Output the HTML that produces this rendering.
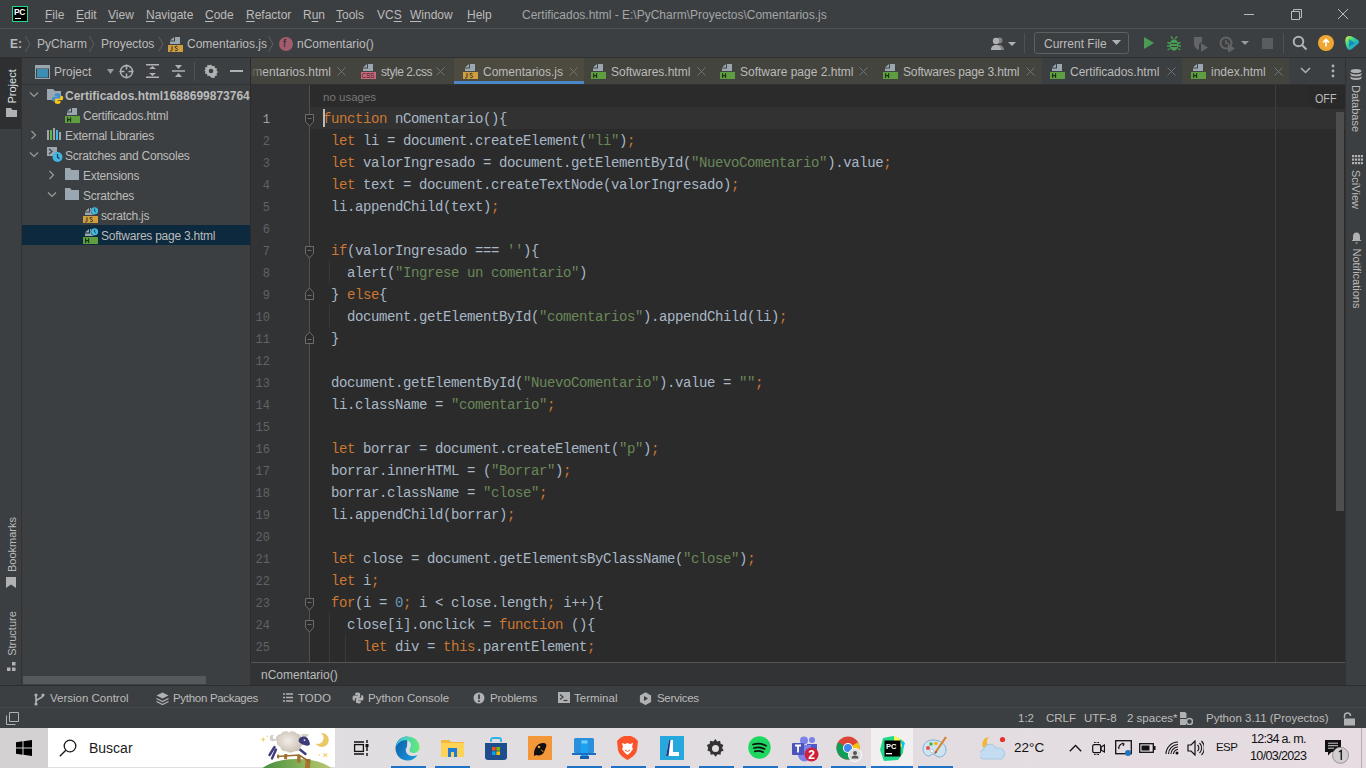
<!DOCTYPE html>
<html><head><meta charset="utf-8">
<style>
*{margin:0;padding:0;box-sizing:border-box}
html,body{width:1366px;height:768px;overflow:hidden;background:#3c3f41;font-family:"Liberation Sans",sans-serif;font-size:12px;color:#bbbbbb}
.a{position:absolute}
.t{position:absolute;white-space:pre;line-height:1}
#menubar{left:0;top:0;width:1366px;height:29px;background:#3c3f41;border-bottom:1px solid #515151}
#navbar{left:0;top:29px;width:1366px;height:29px;background:#3c3f41;border-bottom:1px solid #323232}
#lstripe{left:0;top:57px;width:22px;height:651px;background:#3c3f41;border-right:1px solid #323232}
#proj{left:22px;top:57px;width:228px;height:629px;background:#3c3f41;overflow:hidden}
#tabs{left:250px;top:57px;width:1095px;height:28px;background:#3c3f41;border-bottom:1px solid #323232;overflow:hidden}
#editor{left:250px;top:85px;width:1095px;height:579px;background:#2b2b2b;overflow:hidden}
#crumbs{left:250px;top:662px;width:1095px;height:23px;background:#313335;border-top:1px solid #555555}
#rstripe{left:1345px;top:57px;width:21px;height:651px;background:#3c3f41;border-left:1px solid #323232}
#bottombar{left:0;top:686px;width:1366px;height:22px;background:#3c3f41}
#status{left:0;top:707px;width:1366px;height:21px;background:#3c3f41;border-top:1px solid #474747}
#taskbar{left:0;top:728px;width:1366px;height:40px;background:linear-gradient(90deg,#dfdee0 0%,#e1dde0 50%,#e6dce2 100%)}
.code{left:65px;font-family:"Liberation Mono",monospace;font-size:14px;letter-spacing:-0.4px;line-height:22px;color:#a9b7c6}
.ln{left:0;width:20px;text-align:right;font-family:"Liberation Mono",monospace;font-size:12px;line-height:22px}
.mi{top:9px}
u{text-decoration:underline;text-decoration-thickness:1px;text-underline-offset:1.5px}
.tr{font-size:12px;letter-spacing:-0.25px}
.bb{top:7px;font-size:11.5px}
.sb{top:5px;font-size:11.5px}
.rs{font-size:11px;transform:rotate(90deg);text-align:center}
.k{color:#cc7832}.s{color:#6a8759}.n{color:#6897bb}
</style></head><body>
<svg width="0" height="0" style="position:absolute"><defs>
<g id="ijs"><path d="M8 1h5v7H3V5.5h5z" fill="#9aa7b0"/><path d="M3 4.5L7 1v3.5z" fill="#9aa7b0"/><rect x="1" y="9" width="15" height="7" fill="#cf9e3e"/><path d="M5 10.3v3.6c0 .9-.5 1.1-1.1 1.1H3M10.5 10.8c-.3-.4-.8-.5-1.3-.5-.7 0-1.2.4-1.2 1 0 1.3 2.6.9 2.6 2.3 0 .7-.6 1.1-1.3 1.1-.6 0-1.1-.2-1.4-.6" fill="none" stroke="#2b2b2b" stroke-width="1"/></g>
<g id="ihtml"><path d="M8 1h5v7H3V5.5h5z" fill="#9aa7b0"/><path d="M3 4.5L7 1v3.5z" fill="#9aa7b0"/><rect x="1" y="9" width="15" height="7" fill="#5f9e40"/><path d="M3.6 10.2v4.8M6.6 10.2v4.8M3.6 12.6h3" stroke="#1e2e16" stroke-width="1.1"/></g>
<g id="icss"><path d="M8 1h5v7H3V5.5h5z" fill="#9aa7b0"/><path d="M3 4.5L7 1v3.5z" fill="#9aa7b0"/><rect x="1" y="9" width="15" height="7" fill="#c86a7c"/><text x="1.6" y="15.4" font-family="Liberation Sans" font-size="6.3" fill="#3a1a20">CSS</text></g>
</defs></svg>
<div id="menubar" class="a">
<div class="a" style="left:12px;top:6px;width:16px;height:16px;background:#000;border:1px solid #21d789"></div>
<div class="t" style="left:14px;top:8px;font-size:8.5px;font-weight:bold;color:#fff;letter-spacing:-0.3px">PC</div>
<div class="a" style="left:15px;top:18px;width:6px;height:1px;background:#fff"></div>
<div class="t mi" style="left:45px"><u>F</u>ile</div>
<div class="t mi" style="left:76px"><u>E</u>dit</div>
<div class="t mi" style="left:108px"><u>V</u>iew</div>
<div class="t mi" style="left:146px"><u>N</u>avigate</div>
<div class="t mi" style="left:205px"><u>C</u>ode</div>
<div class="t mi" style="left:246px"><u>R</u>efactor</div>
<div class="t mi" style="left:303px">R<u>u</u>n</div>
<div class="t mi" style="left:336px"><u>T</u>ools</div>
<div class="t mi" style="left:377px">VC<u>S</u></div>
<div class="t mi" style="left:410px"><u>W</u>indow</div>
<div class="t mi" style="left:467px"><u>H</u>elp</div>
<div class="t" style="left:522px;top:9px;color:#a3a5a7">Certificados.html - E:\PyCharm\Proyectos\Comentarios.js</div>
<div class="a" style="left:1244px;top:14px;width:10px;height:1px;background:#bbb"></div>
<svg class="a" style="left:1291px;top:9px" width="11" height="11"><path d="M0.5 2.5h8v8h-8z M2.5 2.5v-2h8v8h-2" fill="none" stroke="#bbb"/></svg>
<svg class="a" style="left:1337px;top:8px" width="12" height="12"><path d="M1 1L11 11M11 1L1 11" stroke="#bbb" stroke-width="1"/></svg>
</div>
<div id="navbar" class="a">
<div class="t" style="left:10px;top:9px;font-weight:bold">E:</div>
<svg class="a" style="left:25px;top:7px" width="6" height="16"><path d="M0.5 0.5L5 8L0.5 15.5" fill="none" stroke="#5e6060"/></svg>
<div class="t" style="left:37px;top:9px">PyCharm</div>
<svg class="a" style="left:89px;top:7px" width="6" height="16"><path d="M0.5 0.5L5 8L0.5 15.5" fill="none" stroke="#5e6060"/></svg>
<div class="t" style="left:101px;top:9px">Proyectos</div>
<svg class="a" style="left:158px;top:7px" width="6" height="16"><path d="M0.5 0.5L5 8L0.5 15.5" fill="none" stroke="#5e6060"/></svg>
<svg class="a" style="left:167px;top:7px" width="16" height="16"><use href="#ijs"/></svg>
<div class="t" style="left:187px;top:9px">Comentarios.js</div>
<svg class="a" style="left:268px;top:7px" width="6" height="16"><path d="M0.5 0.5L5 8L0.5 15.5" fill="none" stroke="#5e6060"/></svg>
<div class="a" style="left:279px;top:8px;width:14px;height:14px;border-radius:50%;background:#a25c6e"></div>
<div class="t" style="left:283px;top:9px;font-size:11px;color:#2b2b2b">f</div>
<div class="t" style="left:297px;top:9px">nComentario()</div>
<svg class="a" style="left:990px;top:7px" width="28" height="16"><circle cx="9.5" cy="4.5" r="3" fill="#7f8284"/><path d="M6 14c0-3.5 1.5-5 3.5-5s4.5 1.5 4.5 5z" fill="#7f8284"/><circle cx="6" cy="5" r="3.2" fill="#afb1b3"/><path d="M1 14c0-3.5 2-5 5-5s5 1.5 5 5z" fill="#afb1b3"/><path d="M18 6h8l-4 4z" fill="#afb1b3"/></svg>
<div class="a" style="left:1024px;top:4px;width:1px;height:20px;background:#515151"></div>
<div class="a" style="left:1034px;top:3px;width:95px;height:22px;border:1px solid #5e6060;border-radius:3px"></div>
<div class="t" style="left:1044px;top:9px">Current File</div>
<svg class="a" style="left:1112px;top:11px" width="9" height="6"><path d="M0 0h9l-4.5 5z" fill="#afb1b3"/></svg>
<svg class="a" style="left:1143px;top:7px" width="12" height="14"><path d="M1 1L11 7L1 13z" fill="#499c54"/></svg>
<svg class="a" style="left:1166px;top:6px" width="16" height="17"><path d="M5 1.5l1.8 2.2M11 1.5L9.2 3.7" stroke="#499c54" stroke-width="1.4"/><ellipse cx="8" cy="10" rx="4.3" ry="5.8" fill="#499c54"/><path d="M1.5 7.5l2.5 1M14.5 7.5l-2.5 1M1 11h3M15 11h-3M1.5 15l2.5-1.5M14.5 15L12 13.5" stroke="#499c54" stroke-width="1.4"/><path d="M5 8.5h6M5 11.5h6" stroke="#3c3f41" stroke-width="1.2"/></svg>
<svg class="a" style="left:1192px;top:7px" width="17" height="16"><path d="M2 1h8v5l-3 2v6c-3-1-5-3-5-6z" fill="#626466"/><path d="M9 7l7 4.5L9 16z" fill="#626466"/></svg>
<svg class="a" style="left:1219px;top:7px" width="30" height="16"><circle cx="7" cy="7" r="5.5" fill="none" stroke="#626466" stroke-width="2"/><path d="M7 4v3.5h3" stroke="#626466" stroke-width="1.5" fill="none"/><path d="M9 8l7 4.5L9 17z" fill="#626466"/><path d="M22 5h8l-4 4z" fill="#9a9a9a"/></svg>
<div class="a" style="left:1262px;top:9px;width:11px;height:11px;background:#5a5d5f"></div>
<div class="a" style="left:1283px;top:4px;width:1px;height:20px;background:#515151"></div>
<svg class="a" style="left:1292px;top:6px" width="16" height="16"><circle cx="6.5" cy="6.5" r="4.8" fill="none" stroke="#afb1b3" stroke-width="2"/><path d="M10 10l4.5 4.5" stroke="#afb1b3" stroke-width="2.2"/></svg>
<div class="a" style="left:1318px;top:6px;width:16px;height:16px;border-radius:50%;background:#f0a732"></div>
<svg class="a" style="left:1318px;top:6px" width="16" height="16"><path d="M8 4.5v7M5 7.5l3-3 3 3" stroke="#fff" stroke-width="1.6" fill="none"/></svg>
<svg class="a" style="left:1344px;top:6px" width="16" height="16"><defs><linearGradient id="tbg" x1="0" y1="0" x2="1" y2="1"><stop offset="0" stop-color="#f9e53c"/><stop offset="0.35" stop-color="#3ddc84"/><stop offset="1" stop-color="#087cfa"/></linearGradient></defs><path d="M3 1.5C5 0.5 7 1 9 2l5 3c1.5 1 1.5 3 0 4l-6 5c-2 1.5-4 1-5-1C1.5 10 1 6 1.5 4 1.8 2.8 2.3 2 3 1.5z" fill="url(#tbg)"/><path d="M5 4l6 4-6 4z" fill="#0a5fd0" opacity="0.6"/></svg>
</div>
<div id="lstripe" class="a">
<div class="a" style="left:0;top:0;width:21px;height:72px;background:#2d2f30"></div>
<div class="t" style="left:-5px;top:23.5px;width:34px;transform:rotate(-90deg);font-size:11px;color:#dfe1e5;text-align:center">Project</div>
<svg class="a" style="left:6px;top:51px" width="11" height="9"><path d="M0 0h5l1.5 2H11v7H0z" fill="#afb1b3"/></svg>
<div class="t" style="left:-15px;top:482px;width:55px;transform:rotate(-90deg);font-size:11px;color:#bbbbbb;text-align:center">Bookmarks</div>
<svg class="a" style="left:6px;top:520px" width="10" height="11"><path d="M0 0h10v11L5 7.5 0 11z" fill="#afb1b3"/></svg>
<div class="t" style="left:-10px;top:571px;width:45px;transform:rotate(-90deg);font-size:11px;color:#bbbbbb;text-align:center">Structure</div>
<svg class="a" style="left:7px;top:605px" width="10" height="10"><path d="M5 0h3.5v3.5H5zM0 5.5h3.5V9H0zM5 5.5h3.5V9H5z" fill="#afb1b3"/></svg>
</div>
<div id="proj" class="a">
<div class="a" style="left:0;top:27px;width:228px;height:1px;background:#323232"></div>
<svg class="a" style="left:13px;top:8px" width="15" height="14"><rect x="0.5" y="0.5" width="14" height="13" fill="none" stroke="#9aa7b0"/><rect x="0.5" y="0.5" width="14" height="3" fill="#9aa7b0"/><rect x="2" y="4" width="11" height="8.5" fill="#3e8db3"/></svg>
<div class="t" style="left:32px;top:9px">Project</div>
<svg class="a" style="left:85px;top:12px" width="8" height="6"><path d="M0 0h7l-3.5 5z" fill="#9a9a9a"/></svg>
<svg class="a" style="left:97px;top:7px" width="15" height="15"><circle cx="7.5" cy="7.5" r="6" fill="none" stroke="#afb1b3" stroke-width="1.5"/><path d="M7.5 0.5v5M7.5 9.5v5M0.5 7.5h5M9.5 7.5h5" stroke="#afb1b3" stroke-width="1.5"/></svg>
<svg class="a" style="left:124px;top:7px" width="13" height="14"><path d="M0 0.75h13M0 13.25h13" stroke="#afb1b3" stroke-width="1.5"/><path d="M3 5l3.5-3 3.5 3zM3 9l3.5 3 3.5-3z" fill="#afb1b3"/></svg>
<svg class="a" style="left:150px;top:7px" width="13" height="14"><path d="M0 7h13" stroke="#afb1b3" stroke-width="1.5"/><path d="M3 1l3.5 4 3.5-4zM3 13l3.5-4 3.5 4z" fill="#afb1b3"/></svg>
<div class="a" style="left:172px;top:5px;width:1px;height:19px;background:#515151"></div>
<svg class="a" style="left:182px;top:7px" width="14" height="14"><path d="M7 0.5l1.3 1.8 2.2-.6.4 2.2 2.2.6-.6 2.2 1.8 1.3-1.8 1.3.6 2.2-2.2.6-.4 2.2-2.2-.6L7 13.5l-1.3-1.8-2.2.6-.4-2.2-2.2-.6.6-2.2L-.3 7l1.8-1.3-.6-2.2 2.2-.6.4-2.2 2.2.6z" fill="#afb1b3"/><circle cx="7" cy="7" r="2.3" fill="#3c3f41"/></svg>
<div class="a" style="left:208px;top:13px;width:13px;height:2px;background:#afb1b3"></div>
<div class="a" style="left:0;top:168px;width:228px;height:20px;background:#0d293e"></div>
<svg class="a chev" style="left:7px;top:34px" width="10" height="8"><path d="M1 1.5l4 4 4-4" fill="none" stroke="#9a9a9a" stroke-width="1.2"/></svg>
<svg class="a" style="left:25px;top:30px" width="18" height="18"><path d="M0 2h6l2 2h6v9H0z" fill="#9aa7b0"/><path d="M6 10h8v3H6z" fill="#3c3f41" opacity="0"/><g id="pyb"><path d="M10.3 6.3c-2.2 0-2.6 1-2.6 1.7v1.3h2.7v.6H6.6C5.6 9.9 5 10.7 5 12.1c0 1.5.6 2.3 1.6 2.3h1v-1.3c0-1 .6-1.7 1.6-1.7h2.6c.9 0 1.6-.6 1.6-1.5V8c0-1-.9-1.7-3.1-1.7z" fill="#3d8fd1"/></g><path d="M10.3 6.3c-2.2 0-2.6 1-2.6 1.7v1.3h2.7v.6H6.6C5.6 9.9 5 10.7 5 12.1c0 1.5.6 2.3 1.6 2.3h1v-1.3c0-1 .6-1.7 1.6-1.7h2.6c.9 0 1.6-.6 1.6-1.5V8c0-1-.9-1.7-3.1-1.7z" fill="#f5c518" transform="rotate(180 10.6 11.6)"/></svg>
<div class="t tr" style="left:43px;top:33px;font-weight:bold;color:#bbbbbb;font-size:12px;letter-spacing:0">Certificados.html1688699873764</div>
<svg class="a" style="left:42px;top:50px" width="16" height="16"><use href="#ihtml"/></svg>
<div class="t tr" style="left:61px;top:53px">Certificados.html</div>
<svg class="a chev" style="left:8px;top:73px" width="8" height="10"><path d="M1.5 1l4 4-4 4" fill="none" stroke="#9a9a9a" stroke-width="1.2"/></svg>
<svg class="a" style="left:24px;top:71px" width="16" height="14"><rect x="1" y="2" width="2" height="10" fill="#9aa7b0"/><rect x="4" y="2" width="2" height="10" fill="#62b543"/><rect x="7" y="0" width="2" height="12" fill="#9aa7b0"/><rect x="10" y="2" width="2" height="10" fill="#40b6e0"/><rect x="13" y="4" width="2" height="8" fill="#9aa7b0"/></svg>
<div class="t tr" style="left:43px;top:73px">External Libraries</div>
<svg class="a chev" style="left:7px;top:94px" width="10" height="8"><path d="M1 1.5l4 4 4-4" fill="none" stroke="#9a9a9a" stroke-width="1.2"/></svg>
<svg class="a" style="left:25px;top:89px" width="17" height="17"><path d="M0 1h10v5l-4 4H0z" fill="#9aa7b0"/><path d="M2 3l3 2.5L2 8" stroke="#3c3f41" stroke-width="1.2" fill="none"/><circle cx="10.5" cy="11" r="5" fill="#40b6e0"/><path d="M10.5 8v3.3l2 1.5" stroke="#1f3a4a" stroke-width="1.2" fill="none"/></svg>
<div class="t tr" style="left:43px;top:93px">Scratches and Consoles</div>
<svg class="a chev" style="left:26px;top:113px" width="8" height="10"><path d="M1.5 1l4 4-4 4" fill="none" stroke="#9a9a9a" stroke-width="1.2"/></svg>
<svg class="a" style="left:43px;top:111px" width="14" height="12"><path d="M0 0h5l1.5 2H14v10H0z" fill="#9aa7b0"/></svg>
<div class="t tr" style="left:61px;top:113px">Extensions</div>
<svg class="a chev" style="left:25px;top:134px" width="10" height="8"><path d="M1 1.5l4 4 4-4" fill="none" stroke="#9a9a9a" stroke-width="1.2"/></svg>
<svg class="a" style="left:43px;top:131px" width="14" height="12"><path d="M0 0h5l1.5 2H14v10H0z" fill="#9aa7b0"/></svg>
<div class="t tr" style="left:61px;top:133px">Scratches</div>
<svg class="a" style="left:60px;top:150px" width="17" height="16"><use href="#ijs"/><circle cx="12.6" cy="3.8" r="3.9" fill="#3c3f41"/><circle cx="12.6" cy="3.8" r="3.5" fill="#40b6e0"/><path d="M12.6 1.6v2.4l1.3 1" stroke="#1f3a4a" stroke-width="0.9" fill="none"/></svg>
<div class="t tr" style="left:79px;top:153px">scratch.js</div>
<svg class="a" style="left:60px;top:171px" width="17" height="16"><use href="#ihtml"/><circle cx="12.6" cy="3.8" r="3.9" fill="#0d293e"/><circle cx="12.6" cy="3.8" r="3.5" fill="#40b6e0"/><path d="M12.6 1.6v2.4l1.3 1" stroke="#1f3a4a" stroke-width="0.9" fill="none"/></svg>
<div class="t tr" style="left:79px;top:173px">Softwares page 3.html</div>
<div class="a" style="left:1px;top:619px;width:183px;height:8px;background:#56595b;border-radius:1px"></div>
</div>
<div id="tabs" class="a">
<div class="a" style="left:0;top:1px;width:1039px;height:26px;background:#44443e"></div>
<div class="a" style="left:792px;top:1px;width:140px;height:26px;background:#3c3f41"></div>
<div class="t" style="left:-13px;top:9px">Comentarios.html</div>
<svg class="a" style="left:87px;top:10px" width="9" height="9"><path d="M0.5 0.5l8 8M8.5 0.5l-8 8" stroke="#707274" stroke-width="1"/></svg>
<svg class="a" style="left:110px;top:6px" width="16" height="16"><use href="#icss"/></svg>
<div class="t" style="left:131px;top:9px;letter-spacing:-0.45px">style 2.css</div>
<svg class="a" style="left:186px;top:10px" width="9" height="9"><path d="M0.5 0.5l8 8M8.5 0.5l-8 8" stroke="#707274" stroke-width="1"/></svg>
<div class="a" style="left:204px;top:1px;width:130px;height:26px;background:#4d4a3f"></div>
<div class="a" style="left:204px;top:24px;width:130px;height:3px;background:#4a88c7"></div>
<svg class="a" style="left:212px;top:6px" width="16" height="16"><use href="#ijs"/></svg>
<div class="t" style="left:233px;top:9px">Comentarios.js</div>
<svg class="a" style="left:319px;top:10px" width="9" height="9"><path d="M0.5 0.5l8 8M8.5 0.5l-8 8" stroke="#707274" stroke-width="1"/></svg>
<svg class="a" style="left:340px;top:6px" width="16" height="16"><use href="#ihtml"/></svg>
<div class="t" style="left:361px;top:9px">Softwares.html</div>
<svg class="a" style="left:447px;top:10px" width="9" height="9"><path d="M0.5 0.5l8 8M8.5 0.5l-8 8" stroke="#707274" stroke-width="1"/></svg>
<svg class="a" style="left:469px;top:6px" width="16" height="16"><use href="#ihtml"/></svg>
<div class="t" style="left:490px;top:9px">Software page 2.html</div>
<svg class="a" style="left:609px;top:10px" width="9" height="9"><path d="M0.5 0.5l8 8M8.5 0.5l-8 8" stroke="#707274" stroke-width="1"/></svg>
<svg class="a" style="left:632px;top:6px" width="16" height="16"><use href="#ihtml"/></svg>
<div class="t" style="left:653px;top:9px;letter-spacing:-0.15px">Softwares page 3.html</div>
<svg class="a" style="left:776px;top:10px" width="9" height="9"><path d="M0.5 0.5l8 8M8.5 0.5l-8 8" stroke="#707274" stroke-width="1"/></svg>
<svg class="a" style="left:799px;top:6px" width="16" height="16"><use href="#ihtml"/></svg>
<div class="t" style="left:820px;top:9px">Certificados.html</div>
<svg class="a" style="left:917px;top:10px" width="9" height="9"><path d="M0.5 0.5l8 8M8.5 0.5l-8 8" stroke="#707274" stroke-width="1"/></svg>
<svg class="a" style="left:940px;top:6px" width="16" height="16"><use href="#ihtml"/></svg>
<div class="t" style="left:961px;top:9px">index.html</div>
<svg class="a" style="left:1024px;top:10px" width="9" height="9"><path d="M0.5 0.5l8 8M8.5 0.5l-8 8" stroke="#707274" stroke-width="1"/></svg>
<div class="a" style="left:0;top:1px;width:14px;height:26px;background:linear-gradient(90deg,#44443e,rgba(68,68,62,0))"></div>
<svg class="a" style="left:1050px;top:10px" width="11" height="7"><path d="M1 1l4.5 4.5L10 1" fill="none" stroke="#afb1b3" stroke-width="1.5"/></svg>
<svg class="a" style="left:1081px;top:7px" width="4" height="14"><circle cx="2" cy="2" r="1.4" fill="#afb1b3"/><circle cx="2" cy="7" r="1.4" fill="#afb1b3"/><circle cx="2" cy="12" r="1.4" fill="#afb1b3"/></svg>
</div>
<div id="editor" class="a">
<div class="a" style="left:0;top:0;width:59px;height:579px;background:#313335"></div>
<div class="a" style="left:59px;top:22px;width:1036px;height:22px;background:#323232"></div>
<div class="a" style="left:59px;top:0;width:1px;height:579px;background:#505050"></div>
<div class="a" style="left:1025px;top:0;width:1px;height:579px;background:#3e3e3e"></div>
<div class="a" style="left:79px;top:176px;width:1px;height:22px;background:#393939"></div>
<div class="a" style="left:79px;top:220px;width:1px;height:22px;background:#393939"></div>
<div class="a" style="left:79px;top:528px;width:1px;height:22px;background:#393939"></div>
<div class="a" style="left:79px;top:550px;width:1px;height:29px;background:#393939"></div>
<div class="a" style="left:95px;top:550px;width:1px;height:29px;background:#393939"></div>
<div class="t" style="left:73px;top:7px;font-size:11.5px;color:#787878">no usages</div>
<div class="t ln" style="top:24px;color:#a4a3a3">1</div>
<div class="t code" style="top:23px"> <span class="k">function</span> nComentario(){</div>
<div class="t ln" style="top:46px;color:#606366">2</div>
<div class="t code" style="top:45px">  <span class="k">let</span> li = document.createElement(<span class="s">"li"</span>)<span class="k">;</span></div>
<div class="t ln" style="top:68px;color:#606366">3</div>
<div class="t code" style="top:67px">  <span class="k">let</span> valorIngresado = document.getElementById(<span class="s">"NuevoComentario"</span>).value<span class="k">;</span></div>
<div class="t ln" style="top:90px;color:#606366">4</div>
<div class="t code" style="top:89px">  <span class="k">let</span> text = document.createTextNode(valorIngresado)<span class="k">;</span></div>
<div class="t ln" style="top:112px;color:#606366">5</div>
<div class="t code" style="top:111px">  li.appendChild(text)<span class="k">;</span></div>
<div class="t ln" style="top:134px;color:#606366">6</div>
<div class="t ln" style="top:156px;color:#606366">7</div>
<div class="t code" style="top:155px">  <span class="k">if</span>(valorIngresado === <span class="s">''</span>){</div>
<div class="t ln" style="top:178px;color:#606366">8</div>
<div class="t code" style="top:177px">    alert(<span class="s">"Ingrese un comentario"</span>)</div>
<div class="t ln" style="top:200px;color:#606366">9</div>
<div class="t code" style="top:199px">  } <span class="k">else</span>{</div>
<div class="t ln" style="top:222px;color:#606366">10</div>
<div class="t code" style="top:221px">    document.getElementById(<span class="s">"comentarios"</span>).appendChild(li)<span class="k">;</span></div>
<div class="t ln" style="top:244px;color:#606366">11</div>
<div class="t code" style="top:243px">  }</div>
<div class="t ln" style="top:266px;color:#606366">12</div>
<div class="t ln" style="top:288px;color:#606366">13</div>
<div class="t code" style="top:287px">  document.getElementById(<span class="s">"NuevoComentario"</span>).value = <span class="s">""</span><span class="k">;</span></div>
<div class="t ln" style="top:310px;color:#606366">14</div>
<div class="t code" style="top:309px">  li.className = <span class="s">"comentario"</span><span class="k">;</span></div>
<div class="t ln" style="top:332px;color:#606366">15</div>
<div class="t ln" style="top:354px;color:#606366">16</div>
<div class="t code" style="top:353px">  <span class="k">let</span> borrar = document.createElement(<span class="s">"p"</span>)<span class="k">;</span></div>
<div class="t ln" style="top:376px;color:#606366">17</div>
<div class="t code" style="top:375px">  borrar.innerHTML = (<span class="s">"Borrar"</span>)<span class="k">;</span></div>
<div class="t ln" style="top:398px;color:#606366">18</div>
<div class="t code" style="top:397px">  borrar.className = <span class="s">"close"</span><span class="k">;</span></div>
<div class="t ln" style="top:420px;color:#606366">19</div>
<div class="t code" style="top:419px">  li.appendChild(borrar)<span class="k">;</span></div>
<div class="t ln" style="top:442px;color:#606366">20</div>
<div class="t ln" style="top:464px;color:#606366">21</div>
<div class="t code" style="top:463px">  <span class="k">let</span> close = document.getElementsByClassName(<span class="s">"close"</span>)<span class="k">;</span></div>
<div class="t ln" style="top:486px;color:#606366">22</div>
<div class="t code" style="top:485px">  <span class="k">let</span> i<span class="k">;</span></div>
<div class="t ln" style="top:508px;color:#606366">23</div>
<div class="t code" style="top:507px">  <span class="k">for</span>(i = <span class="n">0</span><span class="k">;</span> i &lt; close.length<span class="k">;</span> i++){</div>
<div class="t ln" style="top:530px;color:#606366">24</div>
<div class="t code" style="top:529px">    close[i].onclick = <span class="k">function</span> (){</div>
<div class="t ln" style="top:552px;color:#606366">25</div>
<div class="t code" style="top:551px">      <span class="k">let</span> div = <span class="k">this</span>.parentElement<span class="k">;</span></div>
<div class="a" style="left:73px;top:24px;width:2px;height:18px;background:#bbbbbb"></div>
<svg class="a" style="left:54px;top:29px" width="11" height="13"><path d="M1.5 0.5h8v7l-4 4.5-4-4.5z" fill="#2b2b2b" stroke="#6d6d6d"/><path d="M3.5 4.5h4" stroke="#6d6d6d"/></svg>
<svg class="a" style="left:54px;top:161px" width="11" height="13"><path d="M1.5 0.5h8v7l-4 4.5-4-4.5z" fill="#2b2b2b" stroke="#6d6d6d"/><path d="M3.5 4.5h4" stroke="#6d6d6d"/></svg>
<svg class="a" style="left:54px;top:513px" width="11" height="13"><path d="M1.5 0.5h8v7l-4 4.5-4-4.5z" fill="#2b2b2b" stroke="#6d6d6d"/><path d="M3.5 4.5h4" stroke="#6d6d6d"/></svg>
<svg class="a" style="left:54px;top:535px" width="11" height="13"><path d="M1.5 0.5h8v7l-4 4.5-4-4.5z" fill="#2b2b2b" stroke="#6d6d6d"/><path d="M3.5 4.5h4" stroke="#6d6d6d"/></svg>
<svg class="a" style="left:54px;top:202px" width="11" height="13"><path d="M1.5 12.5h8v-7l-4-4.5-4 4.5z" fill="#2b2b2b" stroke="#6d6d6d"/><path d="M3.5 8.5h4" stroke="#6d6d6d"/></svg>
<svg class="a" style="left:54px;top:246px" width="11" height="13"><path d="M1.5 12.5h8v-7l-4-4.5-4 4.5z" fill="#2b2b2b" stroke="#6d6d6d"/><path d="M3.5 8.5h4" stroke="#6d6d6d"/></svg>
<div class="a" style="left:1086px;top:27px;width:8px;height:399px;background:#4e4e4e"></div>
<div class="a" style="left:1058px;top:0;width:37px;height:24px;background:#292929;border-radius:0 0 0 10px"></div>
<div class="t" style="left:1065px;top:8px;font-size:12.5px;letter-spacing:0px;transform:scaleX(0.86);transform-origin:0 0;color:#bbbbbb">OFF</div>
</div>
<div id="crumbs" class="a">
<div class="t" style="left:11px;top:6px">nComentario()</div>
</div>
<div id="rstripe" class="a">
<svg class="a" style="left:4px;top:12px" width="12" height="12"><ellipse cx="6" cy="2" rx="5.5" ry="2" fill="#afb1b3"/><path d="M0.5 3.5v2c0 1.1 2.5 2 5.5 2s5.5-.9 5.5-2v-2c0 1.1-2.5 2-5.5 2s-5.5-.9-5.5-2zM0.5 7v2c0 1.1 2.5 2 5.5 2s5.5-.9 5.5-2V7c0 1.1-2.5 2-5.5 2S.5 8.1.5 7z" fill="#afb1b3"/></svg>
<div class="t rs" style="left:-14px;top:46px;width:47px">Database</div>
<svg class="a" style="left:6px;top:98px" width="11" height="10"><rect x="0" y="0" width="2.2" height="2.2" fill="#afb1b3"/><rect x="0" y="3.5" width="2.2" height="2.2" fill="#afb1b3"/><rect x="0" y="7" width="2.2" height="2.2" fill="#afb1b3"/><rect x="3" y="0" width="2.2" height="2.2" fill="#afb1b3"/><rect x="3" y="3.5" width="2.2" height="2.2" fill="#afb1b3"/><rect x="3" y="7" width="2.2" height="2.2" fill="#afb1b3"/><rect x="6" y="0" width="2.2" height="2.2" fill="#afb1b3"/><rect x="6" y="3.5" width="2.2" height="2.2" fill="#afb1b3"/><rect x="6" y="7" width="2.2" height="2.2" fill="#afb1b3"/><rect x="9" y="0" width="2.2" height="2.2" fill="#afb1b3"/><rect x="9" y="3.5" width="2.2" height="2.2" fill="#afb1b3"/><rect x="9" y="7" width="2.2" height="2.2" fill="#afb1b3"/></svg>
<div class="t rs" style="left:-10px;top:127px;width:39px">SciView</div>
<svg class="a" style="left:5px;top:175px" width="11" height="12"><path d="M5.5 0.5c-2.5 0-3.5 2-3.5 4v3L0.5 9h10L9 7.5v-3c0-2-1-4-3.5-4z" fill="#afb1b3"/><path d="M4 10.5h3l-1.5 1.5z" fill="#afb1b3"/></svg>
<div class="t rs" style="left:-20px;top:216px;width:60px">Notifications</div>
</div>
<div id="bottombar" class="a">
<svg class="a" style="left:34px;top:7px" width="11" height="13"><circle cx="2" cy="2" r="1.6" fill="#afb1b3"/><circle cx="2" cy="11" r="1.6" fill="#afb1b3"/><circle cx="9" cy="2" r="1.6" fill="#afb1b3"/><path d="M2 2v9M9 2c0 4-7 3-7 7" stroke="#afb1b3" stroke-width="1.6" fill="none"/></svg>
<div class="t bb" style="left:50px">Version Control</div>
<svg class="a" style="left:156px;top:6px" width="13" height="13"><path d="M6.5 0.5L12.5 3.5 6.5 6.5 0.5 3.5z" fill="#afb1b3"/><path d="M0.5 6.5l6 3 6-3M0.5 9.5l6 3 6-3" stroke="#afb1b3" stroke-width="1.3" fill="none"/></svg>
<div class="t bb" style="left:173px;letter-spacing:-0.3px">Python Packages</div>
<svg class="a" style="left:283px;top:7px" width="10" height="10"><path d="M0 1h2M3 1h7M0 4.5h2M3 4.5h7M0 8h2M3 8h7" stroke="#afb1b3" stroke-width="1.6"/></svg>
<div class="t bb" style="left:298px">TODO</div>
<svg class="a" style="left:352px;top:6px" width="12" height="12"><path d="M5.8 0.5c-2.8 0-2.6 1.2-2.6 1.2v1.3h2.7v.4H2.1S.5 3.2.5 6s1.4 2.7 1.4 2.7h.9V7.4s-.1-1.4 1.4-1.4h2.5s1.4 0 1.4-1.4V1.9S8.2.5 5.8.5z" fill="#afb1b3"/><path d="M6.2 11.5c2.8 0 2.6-1.2 2.6-1.2V9H6.1v-.4h3.8s1.6.2 1.6-2.6-1.4-2.7-1.4-2.7h-.9v1.3s.1 1.4-1.4 1.4H5.3s-1.4 0-1.4 1.4v2.4s-.2 1.4 2.3 1.4z" fill="#afb1b3"/></svg>
<div class="t bb" style="left:368px">Python Console</div>
<svg class="a" style="left:473px;top:6px" width="12" height="12"><circle cx="6" cy="6" r="5.5" fill="#afb1b3"/><path d="M6 2.5v4.5" stroke="#3c3f41" stroke-width="1.8"/><circle cx="6" cy="9" r="1" fill="#3c3f41"/></svg>
<div class="t bb" style="left:490px;letter-spacing:-0.2px">Problems</div>
<svg class="a" style="left:558px;top:6px" width="12" height="11"><rect x="0" y="0" width="12" height="11" fill="#afb1b3"/><path d="M2 2.5l3 2.5-3 2.5" stroke="#3c3f41" stroke-width="1.2" fill="none"/><path d="M5.5 8.5h4" stroke="#3c3f41" stroke-width="1.2"/></svg>
<div class="t bb" style="left:574px">Terminal</div>
<svg class="a" style="left:639px;top:6px" width="13" height="13"><path d="M6.5 0.3l5.6 3.2v6.4l-5.6 3.2-5.6-3.2V3.5z" fill="#afb1b3"/><path d="M5 4l4 2.5-4 2.5z" fill="#3c3f41"/></svg>
<div class="t bb" style="left:657px;letter-spacing:-0.3px">Services</div>
</div>
<div id="status" class="a">
<svg class="a" style="left:6px;top:4px" width="13" height="13"><path d="M3.5 0.5h9v9h-9z" fill="none" stroke="#afb1b3"/><path d="M0.5 3.5v9h9" fill="none" stroke="#afb1b3"/></svg>
<div class="t sb" style="left:1018px">1:2</div>
<div class="t sb" style="left:1046px">CRLF</div>
<div class="t sb" style="left:1084px">UTF-8</div>
<div class="t sb" style="left:1127px">2 spaces*</div>
<svg class="a" style="left:1180px;top:4px" width="13" height="13"><path d="M0 0h5l1.5 1.5V6H0z" fill="#afb1b3"/><path d="M0 7h6v6H0z" fill="#afb1b3"/><circle cx="9.5" cy="9.5" r="3" fill="none" stroke="#afb1b3" stroke-width="1.6"/></svg>
<div class="t sb" style="left:1206px">Python 3.11 (Proyectos)</div>
<svg class="a" style="left:1342px;top:4px" width="13" height="14"><path d="M2.5 6V4a3 3 0 0 1 6 0" fill="none" stroke="#afb1b3" stroke-width="1.5"/><rect x="2" y="6.5" width="11" height="7" fill="#afb1b3"/></svg>
</div>
<div class="a" style="left:0;top:57px;width:1366px;height:1px;background:#2e2f30"></div>
<div class="a" style="left:250px;top:57px;width:1px;height:606px;background:#2b2b2b"></div>
<div class="a" style="left:0;top:685px;width:1366px;height:1px;background:#2c2d2e"></div>
<div id="taskbar" class="a">
<div class="a" style="left:0;top:0;width:48px;height:40px;background:#d4d1d3"></div>
<svg class="a" style="left:16px;top:12px" width="16" height="16"><path d="M0 2.2L6.5 1.3v6.2H0zM7.5 1.2L16 0v7.5H7.5zM0 8.5h6.5v6.2L0 13.8zM7.5 8.5H16V16l-8.5-1.2z" fill="#000"/></svg>
<div class="a" style="left:48px;top:0;width:287px;height:39px;background:#fff"></div>
<svg class="a" style="left:59px;top:11px" width="18" height="18"><circle cx="11" cy="7" r="5.8" fill="none" stroke="#1a1a1a" stroke-width="1.3"/><path d="M6.8 11.2L0.8 17.2" stroke="#1a1a1a" stroke-width="1.4"/></svg>
<div class="t" style="left:89px;top:13px;font-size:14px;color:#1a1a1a">Buscar</div>
<svg class="a" style="left:255px;top:0" width="80" height="40">
<defs><linearGradient id="hill" x1="0" y1="0" x2="1" y2="0"><stop offset="0" stop-color="#3f8a3c"/><stop offset="0.7" stop-color="#9bbb62"/><stop offset="1" stop-color="#c3c878"/></linearGradient>
<radialGradient id="wool" cx="0.45" cy="0.45" r="0.6"><stop offset="0" stop-color="#f1ede8"/><stop offset="1" stop-color="#c9bfb2"/></radialGradient></defs>
<ellipse cx="42" cy="48" rx="39" ry="17" fill="url(#hill)"/>
<path d="M22 30l0.2-3.5h2l-.2 4zM29 31l.3-5h3l-.3 5.5zM42 34.5l.2-7.5h3.5l-.2 8zM50 40l.5-9h5l-.5 9z" fill="#a8722f"/>
<path d="M22.5 28.5L44 27l11 7" stroke="#9b6a2c" stroke-width="1.6" fill="none"/>
<path d="M19.5 19l-5 8M21 21.5l-4 9M43 20l7.5 6" stroke="#3d3c7a" stroke-width="2.4" stroke-linecap="round"/>
<circle cx="18" cy="10" r="3.3" fill="#d6cfc5"/><circle cx="20" cy="9" r="2.2" fill="#fff"/>
<path d="M21 13c-1-4 2-7 5-7 1-3 6-3.5 8-1.5 2-2 6-1.5 7.5 1 3 0 5.5 3 5 6 2 2 1.5 6-1 7.5 0 3-3 5-6 4-2 2-6 2-8 0-3 1-6-1-6-4-3-1-4.5-4-3.5-6z" fill="url(#wool)"/>
<path d="M46 6.5c2-1 5-1 8 0l-2 2.5h-5z" fill="#d8d0c4"/>
<path d="M44 11c1-2 4-3 7-2 2 1 3.5 4 4 7-.5 1.5-2 2-4 1.5-2.5-.5-5-1.5-6.5-3-1-1-1-2.5-.5-3.5z" fill="#3d3c7a"/>
<circle cx="49.5" cy="12.2" r="0.9" fill="#e8d9c8"/>
<circle cx="66.8" cy="12" r="7" fill="#ecc766"/><circle cx="62.6" cy="10" r="6" fill="#ffffff"/>
<path d="M8.2 8.5l.8 2.4 2.4.5-2.4.6-.8 2.4-.8-2.4-2.4-.6 2.4-.5z" fill="#f3cd6a"/>
<circle cx="12.4" cy="8.2" r="0.8" fill="#f3cd6a"/>
<path d="M68.5 25.3l3.6 3.6M72.1 25.3l-3.6 3.6" stroke="#f3cd6a" stroke-width="1.2"/>
<circle cx="64.4" cy="27" r="0.8" fill="#f3cd6a"/>
</svg>
<svg class="a" style="left:352px;top:12px" width="17" height="16"><path d="M2 2h10M2 14h10" stroke="#111" stroke-width="1.3"/><rect x="2.6" y="4.6" width="8.8" height="6.8" fill="none" stroke="#111" stroke-width="1.3"/><path d="M15 0v3M15 5v6M15 13v3" stroke="#111" stroke-width="1.4"/><rect x="13.5" y="4" width="3" height="3" fill="#111"/></svg>
<svg class="a" style="left:395px;top:8px" width="25" height="25"><defs><linearGradient id="eg" x1="0" y1="0" x2="1" y2="1"><stop offset="0" stop-color="#0c59a4"/><stop offset="1" stop-color="#1b9de2"/></linearGradient><linearGradient id="eg2" x1="0" y1="0" x2="1" y2="0"><stop offset="0" stop-color="#35c1f1"/><stop offset="1" stop-color="#66eb6e"/></linearGradient></defs><path d="M12.5 0.5C5.5 0.5 0.5 6 0.5 12.5c0 6.5 5.2 12 12 12 4.5 0 8-2 10-5.5-3 1.5-7 1.5-9.5-.5-2.5-2-3-5.5-1-7.5" fill="url(#eg)"/><path d="M12.5 0.5c6.5 0 12 4.7 12 10.5 0 3.5-2.5 6-6 6-2.5 0-4-1-4-3 0-2.5 1.5-3 1.5-5C16 5 11 3 6.5 5 3 6.5 1 9.5 0.5 12.5 1 5.5 6 0.5 12.5 0.5z" fill="url(#eg2)"/></svg>
<div class="a" style="left:391px;top:38px;width:35px;height:2px;background:#1f72c4"></div>
<svg class="a" style="left:441px;top:10px" width="23" height="19"><path d="M0 2h8l2 2h13v15H0z" fill="#f5b83d"/><path d="M0 5h23v14H0z" fill="#fcd356"/><path d="M7 10h9v9h-3v-5h-3v5H7z" fill="#1f7bd8"/></svg>
<div class="a" style="left:435px;top:38px;width:35px;height:2px;background:#1f72c4"></div>
<svg class="a" style="left:484px;top:9px" width="24" height="23"><path d="M7 5V3a2 2 0 0 1 2-2h6a2 2 0 0 1 2 2v2" fill="none" stroke="#2bb3f0" stroke-width="1.8"/><path d="M1 6h22v14a3 3 0 0 1-3 3H4a3 3 0 0 1-3-3z" fill="#1e4e8c"/><rect x="8" y="10" width="3.6" height="3.6" fill="#f25022"/><rect x="12.4" y="10" width="3.6" height="3.6" fill="#7fba00"/><rect x="8" y="14.4" width="3.6" height="3.6" fill="#00a4ef"/><rect x="12.4" y="14.4" width="3.6" height="3.6" fill="#ffb900"/></svg>
<svg class="a" style="left:528px;top:8px" width="24" height="24"><rect width="24" height="24" fill="#f2973a"/><path d="M6 16c1-5 4-9 9-9 3 0 4 2 3 4l-2 5c-1 3-5 4-8 3l-2 1z" fill="#111"/><circle cx="11" cy="11" r="1.3" fill="#f2973a"/><path d="M13 14c1 0 2 1 2 2" stroke="#f2973a" fill="none"/></svg>
<svg class="a" style="left:572px;top:9px" width="24" height="23"><rect x="2" y="1" width="20" height="15" rx="1.5" fill="#2a8fdd"/><rect x="9" y="3" width="7" height="17" rx="1" fill="#1da1f2"/><rect x="9.5" y="3.5" width="6" height="3" fill="#6fd0ff"/><path d="M0 16h24v2H0z" fill="#1c6fc0"/><rect x="8" y="19" width="9" height="3" fill="#1a5fa8"/></svg>
<div class="a" style="left:567px;top:38px;width:35px;height:2px;background:#1f72c4"></div>
<svg class="a" style="left:617px;top:8px" width="21" height="24"><path d="M3 2l4-2h7l4 2 3 3-1 9c-1 5-6 8-9.5 10C7 22 2 19 1 14L0 5z" fill="#fb542b"/><path d="M5 7l3 1 2.5-1 2.5 1 3-1-1 4 1 2-3 4-2.5 2-2.5-2-3-4 1-2z" fill="#fff"/><path d="M8 14l2.5 1.5L13 14" stroke="#fb542b" stroke-width="1" fill="none"/></svg>
<div class="a" style="left:611px;top:38px;width:35px;height:2px;background:#1f72c4"></div>
<svg class="a" style="left:660px;top:8px" width="24" height="24"><rect width="24" height="24" fill="#27a8dc"/><path d="M9 4h4v12h6v4H6z" fill="#fff"/><path d="M6 20L9 4h1.5L8.5 20z" fill="#1b3c8a"/></svg>
<div class="a" style="left:655px;top:38px;width:35px;height:2px;background:#1f72c4"></div>
<svg class="a" style="left:706px;top:11px" width="19" height="19"><path d="M9.5 0l1.6 2.6 3-.8.5 3 2.8 1.3-1.3 2.8 1.6 2.6-2.8 1.2-.3 3.1-3-.5-2 2.4-2-2.4-3 .5-.4-3.1-2.8-1.2L2.2 8.9.9 6.1l2.8-1.3.5-3 3 .8z" fill="#333"/><circle cx="9.5" cy="9.5" r="3.5" fill="#e3dde0"/></svg>
<div class="a" style="left:699px;top:38px;width:35px;height:2px;background:#1f72c4"></div>
<svg class="a" style="left:748px;top:8px" width="23" height="23"><circle cx="11.5" cy="11.5" r="11.2" fill="#1ed760"/><path d="M5 8.5c4-1.3 9-1 13 1.2M6 12c3.3-1 7.5-.7 10.5 1M6.8 15.3c2.6-.8 5.8-.5 8.2.8" stroke="#111" stroke-width="1.8" stroke-linecap="round" fill="none"/></svg>
<div class="a" style="left:743px;top:38px;width:35px;height:2px;background:#1f72c4"></div>
<svg class="a" style="left:792px;top:8px" width="27" height="26"><circle cx="20" cy="4" r="3" fill="#7b83eb"/><path d="M15 8h10v8a5 5 0 0 1-10 0z" fill="#5059c9"/><circle cx="12" cy="4.5" r="4" fill="#7b83eb"/><path d="M6 9h13v10a6.5 6.5 0 0 1-13 0z" fill="#7b83eb"/><rect x="0" y="7" width="12" height="12" rx="1" fill="#4b53bc"/><path d="M3 9.5h6M6 9.5v7" stroke="#fff" stroke-width="1.8"/><circle cx="19.5" cy="18.5" r="7" fill="#cf1f3c"/><text x="16.3" y="23" font-family="Liberation Sans" font-weight="bold" font-size="12" fill="#fff">2</text></svg>
<div class="a" style="left:787px;top:38px;width:35px;height:2px;background:#1f72c4"></div>
<svg class="a" style="left:836px;top:8px" width="26" height="26"><circle cx="12" cy="12" r="11.5" fill="#db4437"/><path d="M12 12L22 6.2A11.5 11.5 0 0 1 17.8 22z" fill="#f4c20d"/><path d="M12 12l5.8 10A11.5 11.5 0 0 1 0.5 12.8 11.5 11.5 0 0 1 2 6.2z" fill="#0f9d58"/><circle cx="12" cy="12" r="5" fill="#fff"/><circle cx="12" cy="12" r="4" fill="#4285f4"/><circle cx="19" cy="19" r="6.5" fill="#dcdcdc" stroke="#fff" stroke-width="1"/><circle cx="19" cy="17" r="2" fill="#555"/><path d="M15.5 22.5a3.5 3 0 0 1 7 0z" fill="#555"/></svg>
<div class="a" style="left:831px;top:38px;width:35px;height:2px;background:#1f72c4"></div>
<div class="a" style="left:871px;top:0;width:42px;height:40px;background:#f1eff0"></div>
<svg class="a" style="left:880px;top:8px" width="25" height="25"><path d="M3 2l10-2 11 5-1 12-5 7-14 1L0 14z" fill="#21d789"/><path d="M14 0l10 5-2 6-8-3z" fill="#fcf84a"/><path d="M20 3l5 4-2 6z" fill="#07c3f2"/><rect x="4.5" y="4.5" width="16" height="16" fill="#000"/><text x="6" y="12.5" font-family="Liberation Sans" font-weight="bold" font-size="7.5" fill="#fff">PC</text><rect x="6" y="17" width="6" height="1.3" fill="#fff"/></svg>
<div class="a" style="left:871px;top:38px;width:42px;height:2px;background:#1f72c4"></div>
<svg class="a" style="left:922px;top:8px" width="26" height="24"><path d="M11 4C5 4 1 8 1 13c0 4 3 7 6 7 2 0 2-2 4-2s3 3 6 3c4 0 7-3 7-7 0-6-6-10-13-10z" fill="#cfe4f3" stroke="#6aa5d0" stroke-width="0.8"/><circle cx="6" cy="12" r="2" fill="#e94c4c"/><circle cx="9" cy="8" r="1.8" fill="#4caf50"/><circle cx="14" cy="7.5" r="1.8" fill="#f4b400"/><circle cx="10" cy="15" r="1.6" fill="#ffffff" stroke="#9ab" stroke-width="0.5"/><path d="M13 17L24 1" stroke="#d7832e" stroke-width="2.2"/><path d="M12 18.5l2-3.5 1.2 1z" fill="#6d4c2f"/></svg>
<div class="a" style="left:918px;top:38px;width:35px;height:2px;background:#1f72c4"></div>
<svg class="a" style="left:980px;top:8px" width="28" height="24"><path d="M9 1a7 7 0 1 0 7 9 5.5 5.5 0 0 1-7-9z" fill="#f2b630"/><path d="M4 23a4.5 4.5 0 0 1-.5-9 6.5 6.5 0 0 1 12.5-1.5A5 5 0 0 1 21.5 23z" fill="#c4dcf2" stroke="#9cc0e3" stroke-width="0.8"/><circle cx="22.5" cy="3.5" r="2.6" fill="#e5312b"/></svg>
<div class="t" style="left:1014px;top:13px;font-size:13.5px;color:#111">22°C</div>
<svg class="a" style="left:1069px;top:16px" width="13" height="8"><path d="M0.8 7.2L6.5 1.5l5.7 5.7" fill="none" stroke="#111" stroke-width="1.3"/></svg>
<svg class="a" style="left:1092px;top:14px" width="13" height="13"><rect x="0.7" y="2.7" width="8" height="8" rx="1.5" fill="none" stroke="#111" stroke-width="1.2"/><path d="M9 5l3.5-2v7L9 8z" fill="none" stroke="#111" stroke-width="1.2"/><path d="M2 0.6a4 3 0 0 1 5 0M2 12.4a4 3 0 0 0 5 0" stroke="#111" stroke-width="1" fill="none"/></svg>
<svg class="a" style="left:1115px;top:12px" width="17" height="16"><rect x="0.7" y="0.7" width="15.6" height="13" fill="none" stroke="#111" stroke-width="1.3"/><path d="M4 9a4 4 0 0 1 5-5M7 3l2 1-1 2" fill="none" stroke="#111" stroke-width="1.1"/><circle cx="13" cy="13" r="3" fill="#1f72c4"/></svg>
<svg class="a" style="left:1139px;top:15px" width="17" height="10"><rect x="0.7" y="0.7" width="13.6" height="8.6" fill="none" stroke="#111" stroke-width="1.3"/><rect x="2.5" y="2.5" width="8" height="5" fill="#111"/><rect x="14.5" y="3" width="2" height="4" fill="#111"/></svg>
<svg class="a" style="left:1165px;top:13px" width="14" height="14"><path d="M1 13a12 12 0 0 1 12-12M3.5 13a9.5 9.5 0 0 1 9.5-9.5M6 13a7 7 0 0 1 7-7M8.5 13a4.5 4.5 0 0 1 4.5-4.5" fill="none" stroke="#111" stroke-width="1.1"/><circle cx="12" cy="12" r="1.5" fill="#111"/></svg>
<svg class="a" style="left:1187px;top:12px" width="17" height="16"><path d="M1 5h3l4-4v14l-4-4H1z" fill="none" stroke="#111" stroke-width="1.2"/><path d="M10.5 5a4 4 0 0 1 0 6M12.5 3a7 7 0 0 1 0 10M14.5 1a10 10 0 0 1 0 14" fill="none" stroke="#111" stroke-width="1.1"/></svg>
<div class="t" style="left:1216px;top:14px;font-size:11.5px;color:#111;letter-spacing:-0.6px">ESP</div>
<div class="t" style="left:1251px;top:4.5px;font-size:12.5px;color:#111;letter-spacing:-0.7px">12:34 a. m.</div>
<div class="t" style="left:1250px;top:22px;font-size:12.5px;color:#111;letter-spacing:-0.63px">10/03/2023</div>
<div class="a" style="left:1361px;top:0;width:1px;height:40px;background:#b3abb0"></div>
<svg class="a" style="left:1324px;top:11px" width="28" height="28"><path d="M1 1h16v12H7.5L4 16.5V13H1z" fill="#111"/><path d="M4 4.2h10M4 6.7h10M4 9.2h6" stroke="#e8e4e6" stroke-width="0.9"/><circle cx="16.5" cy="16.3" r="8" fill="#d2ced0" stroke="#8e8a8c" stroke-width="0.9"/><path d="M15 12.8l2.3-1.3V21" stroke="#222" stroke-width="1.5" fill="none"/></svg>
</div>
</body></html>
